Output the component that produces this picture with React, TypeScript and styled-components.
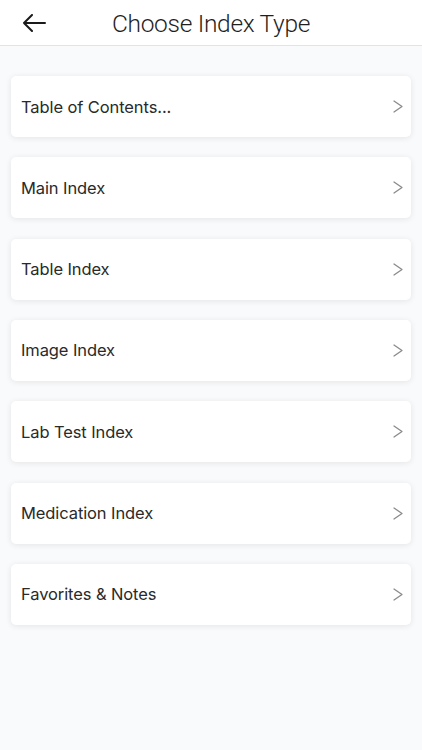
import React from "react";
import styled, { createGlobalStyle } from "styled-components";

const Global = createGlobalStyle`
  html, body { margin: 0; padding: 0; background: #f9fafc; }
  body { font-family: Inter, "Noto Sans", sans-serif; }
`;

const Page = styled.div`
  min-height: 750px;
  background: #f9fafc;
`;

const Header = styled.header`
  height: 45px;
  background: #ffffff;
  border-bottom: 1px solid #e2e3e6;
  display: flex;
  align-items: center;
  justify-content: center;
  position: relative;
`;

const BackButton = styled.button`
  position: absolute;
  left: 18px;
  top: 7px;
  width: 32px;
  height: 32px;
  padding: 0;
  border: none;
  background: transparent;
  display: flex;
  align-items: center;
  justify-content: center;
`;

const Title = styled.h1`
  margin: 0;
  font-family: Roboto, "Liberation Sans", sans-serif;
  font-weight: 300;
  font-size: 24.5px;
  color: #1f1f1f;
  letter-spacing: -0.3px;
  padding-top: 2px;
`;

const List = styled.div`
  display: flex;
  flex-direction: column;
  gap: 20.33px;
  padding: 30px 11px 0 11px;
`;

const Card = styled.div`
  height: 61px;
  background: #fff;
  border-radius: 5px;
  box-shadow: 0 1px 6px rgba(0, 0, 0, 0.09);
  display: flex;
  align-items: center;
  justify-content: space-between;
  padding: 0 8px 0 10px;
`;

const Label = styled.span`
  font-size: 16.5px;
  color: #2a2a2a;
  letter-spacing: -0.1px;
`;

const Chevron = styled.svg`
  width: 10px;
  height: 13px;
  flex: none;
`;

const items = [
  "Table of Contents...",
  "Main Index",
  "Table Index",
  "Image Index",
  "Lab Test Index",
  "Medication Index",
  "Favorites & Notes",
];

export default function App() {
  return (
    <Page>
      <Global />
      <Header>
        <BackButton aria-label="Back">
          <svg width="24" height="18" viewBox="0 0 24 18" fill="none">
            <path d="M23 9H2M10 1L2 9l8 8" stroke="#1a1a1a" strokeWidth="2" strokeLinecap="round" strokeLinejoin="round" />
          </svg>
        </BackButton>
        <Title>Choose Index Type</Title>
      </Header>
      <List>
        {items.map((t) => (
          <Card key={t}>
            <Label>{t}</Label>
            <Chevron viewBox="0 0 10 13" fill="none">
              <path d="M1 1l8 5.5L1 12" stroke="#8a8a8a" strokeWidth="1.3" strokeLinecap="round" strokeLinejoin="round" />
            </Chevron>
          </Card>
        ))}
      </List>
    </Page>
  );
}
